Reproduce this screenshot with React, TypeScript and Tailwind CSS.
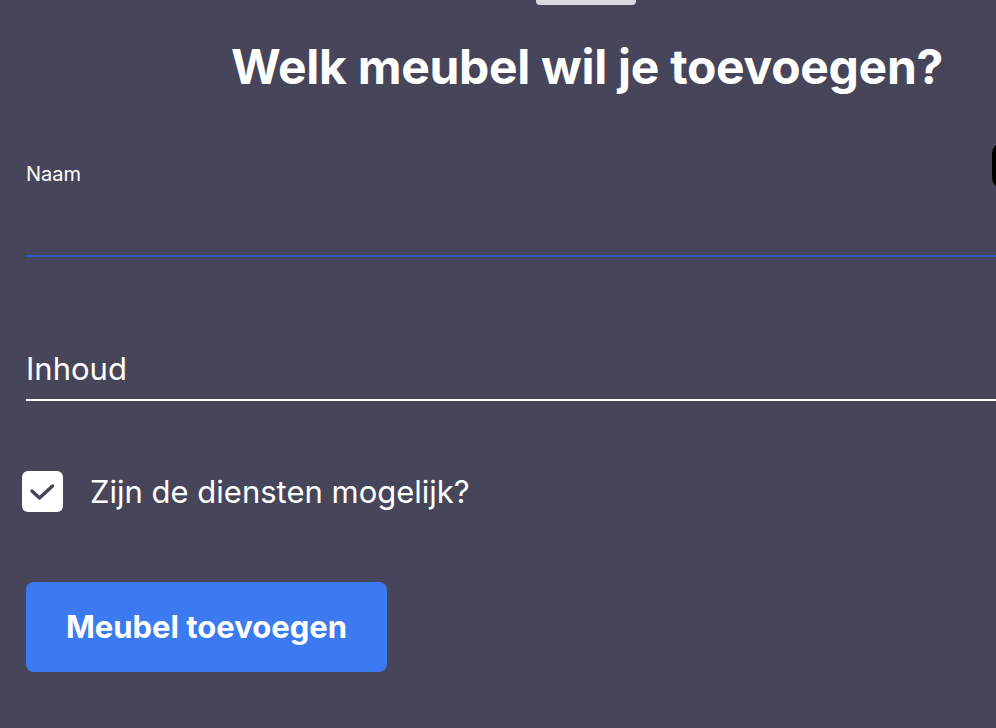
import React from "react";

export default function App() {
  return (
    <div
      className="w-[996px] h-[728px] bg-[#474559] overflow-hidden text-white"
      style={{ fontFamily: "Inter, 'Noto Sans', sans-serif" }}
    >
      <div className="ml-[536px] w-[100px] h-[5px] rounded-b-[4px] bg-[#d8d8e0]" />
      <div className="ml-[26px] w-[1122px]">
        <h1 className="mt-[30px] text-center text-[48px] leading-[64px] font-bold tracking-[-0.3px]">
          Welk meubel wil je toevoegen?
        </h1>
        <div className="relative mt-[63px]">
          <label className="block text-[20px] leading-[24px] text-white">Naam</label>
          <div className="h-[69px]" />
          <div className="h-[2px] bg-[#2d57c4]" />
          <div className="absolute left-[966px] top-[-19px] w-[40px] h-[45px] rounded-[10px] bg-black" />
        </div>
        <div className="mt-[92px]">
          <div className="text-[31px] leading-[40px]">Inhoud</div>
          <div className="mt-[10px] h-[2px] bg-white" />
        </div>
        <div className="mt-[70px] flex items-center -ml-[4px]">
          <div className="w-[41px] h-[41px] rounded-[6px] bg-white flex items-center justify-center">
            <svg width="41" height="41" viewBox="0 0 41 41">
              <path
                d="M10 20 L17.5 27 L30.5 15"
                fill="none"
                stroke="#474559"
                strokeWidth="3.5"
                strokeLinecap="round"
                strokeLinejoin="round"
              />
            </svg>
          </div>
          <span className="ml-[27px] text-[31px] leading-[40px]">Zijn de diensten mogelijk?</span>
        </div>
        <button className="mt-[70px] w-[361px] h-[90px] rounded-[8px] bg-[#3b7af0] text-white text-[31px] font-bold flex items-center justify-center">
          Meubel toevoegen
        </button>
      </div>
    </div>
  );
}
